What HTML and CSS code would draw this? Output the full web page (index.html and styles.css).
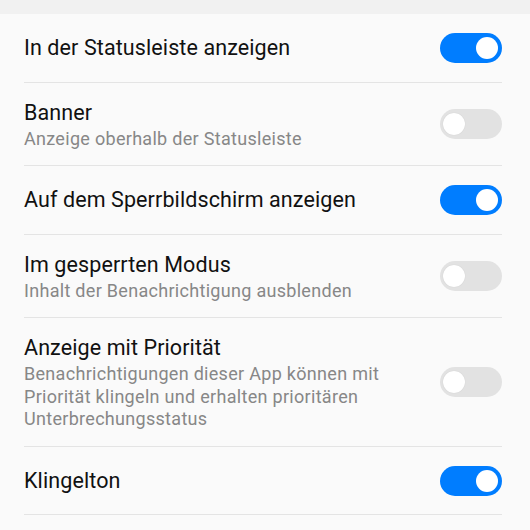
FILE: index.html
```html
<!DOCTYPE html>
<html lang="de">
    <head>
        <meta charset="UTF-8" />
        <meta name="viewport" content="width=device-width, initial-scale=1.0" />
        <title>Benachrichtigungen</title>
        <link rel="stylesheet" href="styles.css">
    </head>
    <body>
        <div class="top-band"></div>
        <ul class="settings">
            <li class="row">
                <div class="text">
                    <div class="title">In der Statusleiste anzeigen</div>
                </div>
                <span class="switch on"></span>
            </li>
            <li class="row">
                <div class="text">
                    <div class="title">Banner</div>
                    <div class="summary">Anzeige oberhalb der Statusleiste</div>
                </div>
                <span class="switch"></span>
            </li>
            <li class="row">
                <div class="text">
                    <div class="title">Auf dem Sperrbildschirm anzeigen</div>
                </div>
                <span class="switch on"></span>
            </li>
            <li class="row">
                <div class="text">
                    <div class="title">Im gesperrten Modus</div>
                    <div class="summary">Inhalt der Benachrichtigung ausblenden</div>
                </div>
                <span class="switch"></span>
            </li>
            <li class="row">
                <div class="text">
                    <div class="title">Anzeige mit Priorität</div>
                    <div class="summary">Benachrichtigungen dieser App können mit Priorität klingeln und erhalten prioritären Unterbrechungsstatus</div>
                </div>
                <span class="switch"></span>
            </li>
            <li class="row">
                <div class="text">
                    <div class="title">Klingelton</div>
                </div>
                <span class="switch on"></span>
            </li>
        </ul>
    </body>
</html>
```

FILE: styles.css
```css
body {
    font-family: Roboto, "Noto Sans", sans-serif;
    margin: 0;
    padding: 0;
    background-color: #fafafa;
    color: #111;
}
.top-band {
    height: 14px;
    background-color: #f1f1f1;
}
.settings {
    list-style: none;
    margin: 0;
    padding: 0 28px 0 24px;
}
.row {
    display: flex;
    align-items: center;
    min-height: 36.5px;
    padding: 16px 0 15px;
    border-bottom: 1px solid #e4e4e4;
}
.text {
    flex: 1;
    margin-right: 24px;
}
.title {
    font-size: 21.5px;
    line-height: 28px;
    letter-spacing: 0.1px;
}
.summary {
    margin-top: 1px;
    font-size: 18px;
    line-height: 22.5px;
    letter-spacing: 0.3px;
    color: #878787;
}
.switch {
    position: relative;
    flex: none;
    width: 62px;
    height: 30px;
    border-radius: 15px;
    background-color: #e2e2e2;
}
.switch::after {
    content: "";
    position: absolute;
    top: 4px;
    left: 3px;
    width: 22px;
    height: 22px;
    border-radius: 50%;
    background-color: #fff;
    box-shadow: 0 0 1px rgba(0, 0, 0, 0.15);
}
.switch.on {
    background-color: #007dff;
}
.switch.on::after {
    left: auto;
    right: 4px;
    box-shadow: none;
}
```
